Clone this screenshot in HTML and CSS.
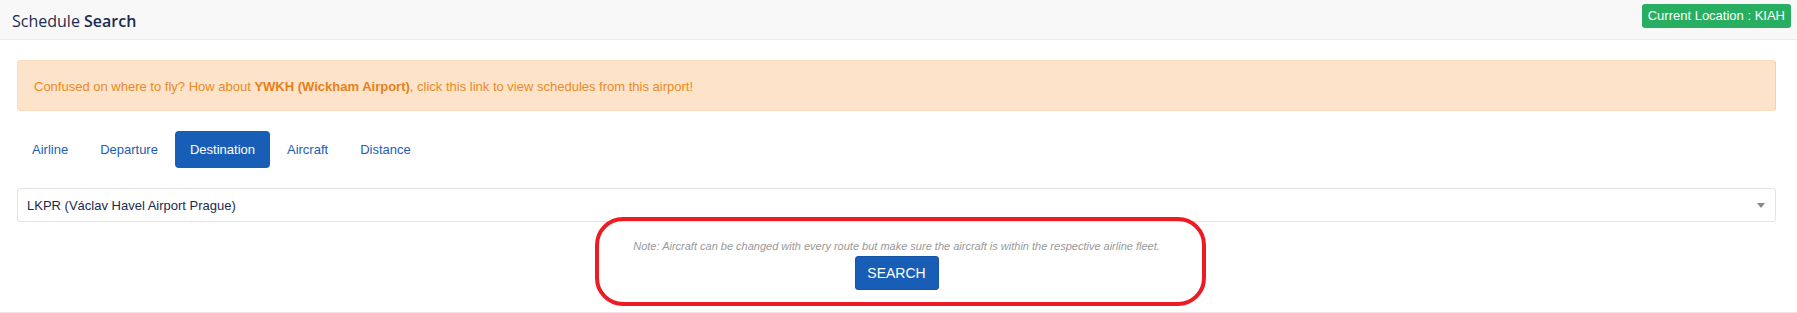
FILE: index.html
```html
<!DOCTYPE html>
<html lang="en">
<head>
<meta charset="utf-8">
<title>Schedule Search</title>
<link rel="stylesheet" href="styles.css">
</head>
<body>
<header class="topbar">
  <h1 class="title">Schedule <strong>Search</strong></h1>
  <span class="badge">Current Location : KIAH</span>
</header>
<main class="content">
  <div class="alert">Confused on where to fly? How about&nbsp;<strong>YWKH (Wickham Airport)</strong>, click this link to view schedules from this airport!</div>
  <ul class="pills">
    <li><a class="pill">Airline</a></li>
    <li><a class="pill">Departure</a></li>
    <li><a class="pill active">Destination</a></li>
    <li><a class="pill">Aircraft</a></li>
    <li><a class="pill">Distance</a></li>
  </ul>
  <div class="select">
    <span class="select-value">LKPR (Václav Havel Airport Prague)</span>
    <span class="caret"></span>
  </div>
  <div class="search-area">
    <div class="highlight">
      <p class="note">Note: Aircraft can be changed with every route but make sure the aircraft is within the respective airline fleet.</p>
      <button class="btn">SEARCH</button>
    </div>
  </div>
</main>
</body>
</html>
```
FILE: styles.css
```css
* { box-sizing: border-box; }
html, body { margin: 0; padding: 0; background: #fff; }
body { font-family: "Liberation Sans", Arial, sans-serif; font-size: 13px; color: #333; }

.topbar {
  height: 40px;
  background: #f8f8f8;
  border-bottom: 1px solid #ececec;
  display: flex;
  justify-content: space-between;
  align-items: flex-start;
  padding: 0 6px 0 12px;
}
.title {
  margin: 0;
  font-family: "Open Sans", sans-serif;
  font-size: 16px;
  font-weight: 400;
  line-height: 22px;
  margin-top: 10px;
  color: #1b2b4f;
}
.title strong { font-weight: 600; }
.badge {
  margin-top: 4px;
  height: 24px;
  line-height: 24px;
  padding: 0 6px;
  background: #27ae60;
  color: #fff;
  border-radius: 3px;
  font-size: 13px;
}

.content {
  padding: 20px 21px 0 17px;
  border-bottom: 1px solid #e6e6e6;
}

.alert {
  height: 51px;
  display: flex;
  align-items: center;
  padding: 2px 16px 0;
  background: #fde3c9;
  border: 1px solid #fcdcbb;
  border-right-color: #fbcf9f;
  border-radius: 3px;
  color: #ec8a25;
  font-size: 13px;
}
.alert strong { font-weight: 700; color: #e97f18; }

.pills {
  list-style: none;
  margin: 20px 0 0;
  padding: 0;
  display: flex;
  gap: 2px;
}
.pill {
  display: block;
  height: 37px;
  line-height: 37px;
  padding: 0 15px;
  color: #1a5eb8;
  border-radius: 4px;
  font-size: 13px;
  cursor: pointer;
}
.pill.active { background: #195eb6; color: #fff; }

.select {
  margin-top: 20px;
  height: 34px;
  border: 1px solid #e3e3e3;
  border-radius: 3px;
  display: flex;
  align-items: center;
  justify-content: space-between;
  padding: 0 10px 0 9px;
  color: #1b2b4f;
  font-size: 13px;
}
.caret {
  width: 0;
  height: 0;
  border-left: 4px solid transparent;
  border-right: 4px solid transparent;
  border-top: 5px solid #888;
  margin-top: 1px;
}

.search-area {
  display: flex;
  justify-content: center;
  padding-bottom: 6px;
}
.highlight {
  position: relative;
  width: 611px;
  height: 89px;
  margin-top: -5px;
  margin-left: 8px;
  border: 4px solid #ed1c24;
  border-radius: 28px;
  display: flex;
  flex-direction: column;
  align-items: center;
  padding: 18px 8px 0 0;
}
.note {
  margin: 0;
  font-size: 11px;
  line-height: 14px;
  font-style: italic;
  color: #999;
}
.btn {
  margin-top: 3px;
  height: 34px;
  width: 84px;
  padding: 0;
  border: 1px solid #1656a8;
  border-radius: 3px;
  background: #195eb6;
  color: #fff;
  font-family: "Liberation Sans", Arial, sans-serif;
  font-size: 14px;
}
```
